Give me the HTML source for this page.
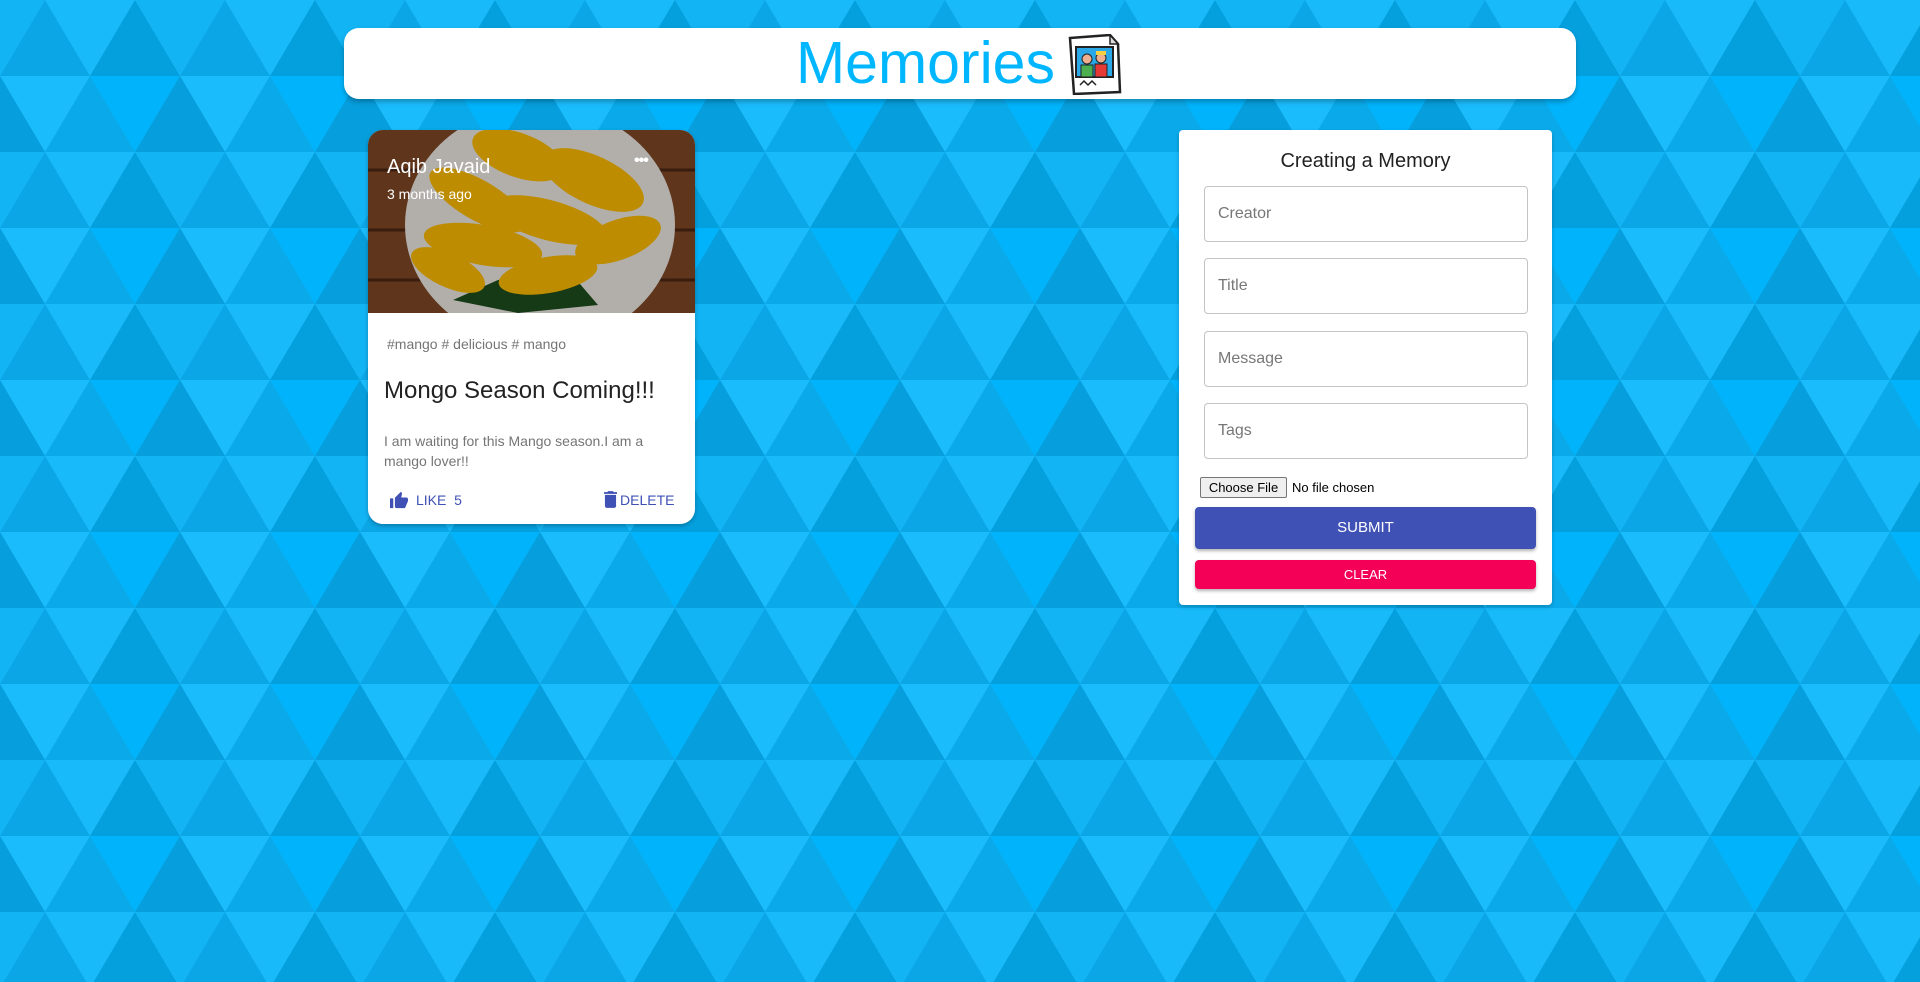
<!DOCTYPE html>
<html><head><meta charset="utf-8"><style>
*{box-sizing:border-box;margin:0;padding:0}
body{width:1920px;height:982px;overflow:hidden;font-family:"Liberation Sans",Arial,sans-serif;position:relative;background:#10b0f0}
#bg{position:absolute;left:0;top:0}
.hdr{position:absolute;left:344px;top:28px;width:1232px;height:71px;background:#fff;border-radius:15px;box-shadow:0 3px 5px rgba(0,0,0,.25)}
.hdr h1{position:absolute;left:796px;top:0;font-weight:400;font-size:59px;color:#00b7ff;line-height:71px;margin-left:-344px}
.card{position:absolute;left:368px;top:130px;width:327px;height:394px;background:#fff;border-radius:15px;overflow:hidden;box-shadow:0 2px 4px rgba(0,0,0,.25)}
.img{position:absolute;left:0;top:0;width:327px;height:183px}
.t{position:absolute;white-space:nowrap}
.form{position:absolute;left:1179px;top:130px;width:373px;height:475px;background:#fff;border-radius:4px;box-shadow:0 2px 4px rgba(0,0,0,.2)}
.inp{position:absolute;left:25px;width:324px;height:56px;border:1px solid #c4c4c4;border-radius:4px;font-size:16px;color:#777;padding:18px 0 0 13px}
</style></head><body>
<svg id="bg" width="1920" height="982">
<defs><pattern id="p" width="180" height="152" patternUnits="userSpaceOnUse">
<rect width="180" height="152" fill="#10b0f0"/>
<polygon points="0,76 45,0 90,76" fill="#0ba6e6"/>
<polygon points="45,0 135,0 90,76" fill="#18bafa"/>
<polygon points="90,76 135,0 180,76" fill="#04a0de"/>
<polygon points="-45,0 45,0 0,76" fill="#13b4f4"/>
<polygon points="135,0 225,0 180,76" fill="#13b4f4"/>
<polygon points="0,76 90,76 45,152" fill="#1bbcfc"/>
<polygon points="45,152 90,76 135,152" fill="#0aa9e9"/>
<polygon points="90,76 180,76 135,152" fill="#00b3fb"/>
<polygon points="-45,152 0,76 45,152" fill="#069edc"/>
<polygon points="135,152 180,76 225,152" fill="#069edc"/>
</pattern></defs>
<rect width="1920" height="982" fill="url(#p)"/>
</svg>
<div class="hdr"><h1>Memories</h1>
<svg style="position:absolute;left:722px;top:6px" width="57" height="61" viewBox="0 0 57 61">
<polygon points="4,4 44,1 52,10 54,58 8,60" fill="#fff" stroke="#222" stroke-width="2.5"/>
<polygon points="44,1 44,10 52,10" fill="#ddd" stroke="#222" stroke-width="1.5"/>
<rect x="10" y="13" width="37" height="30" fill="#2aa8e8" stroke="#222" stroke-width="2"/>
<circle cx="21" cy="25" r="5" fill="#f0b090" stroke="#222"/><circle cx="35" cy="24" r="5" fill="#f0b090" stroke="#222"/>
<rect x="30" y="17" width="10" height="4" fill="#f5d040"/>
<rect x="15" y="31" width="12" height="12" fill="#4caf50" stroke="#222"/><rect x="29" y="30" width="12" height="13" fill="#e53935" stroke="#222"/>
<path d="M14,51 l4,-4 4,4 4,-4 4,4" fill="none" stroke="#222" stroke-width="1.5"/>
</svg></div>

<div class="card">
<svg class="img" viewBox="0 0 327 183">
<rect width="327" height="183" fill="#7a4424"/>
<g stroke="#4a2612" stroke-width="3"><line x1="0" y1="40" x2="327" y2="40"/><line x1="0" y1="100" x2="327" y2="100"/><line x1="0" y1="150" x2="327" y2="150"/></g>
<ellipse cx="172" cy="95" rx="135" ry="120" fill="#e4e0da"/>
<polygon points="85,170 130,150 200,140 230,175 150,183" fill="#1d4a1d"/>
<g fill="#f2b400">
<ellipse cx="150" cy="25" rx="48" ry="22" transform="rotate(20 150 25)"/>
<ellipse cx="225" cy="50" rx="55" ry="24" transform="rotate(25 225 50)"/>
<ellipse cx="110" cy="70" rx="55" ry="20" transform="rotate(30 110 70)"/>
<ellipse cx="180" cy="90" rx="60" ry="20" transform="rotate(15 180 90)"/>
<ellipse cx="115" cy="115" rx="60" ry="20" transform="rotate(10 115 115)"/>
<ellipse cx="250" cy="110" rx="45" ry="20" transform="rotate(-20 250 110)"/>
<ellipse cx="180" cy="145" rx="50" ry="18" transform="rotate(-10 180 145)"/>
<ellipse cx="80" cy="140" rx="40" ry="17" transform="rotate(25 80 140)"/>
</g>
<rect width="327" height="183" fill="rgba(0,0,0,.22)"/>
</svg>
<div class="t" style="left:19px;top:26px;font-size:20px;color:#fff">Aqib Javaid</div>
<div class="t" style="left:19px;top:56px;font-size:14px;color:#fff">3 months ago</div>
<div class="t" style="left:266px;top:22px;font-size:16px;color:#fff;font-weight:bold;letter-spacing:-1px">•••</div>
<div class="t" style="left:19px;top:206px;font-size:14px;color:#757575">#mango # delicious # mango</div>
<div class="t" style="left:16px;top:247px;font-size:24px;color:#222">Mongo Season Coming!!!</div>
<div class="t" style="left:16px;top:301px;font-size:14px;color:#757575;line-height:20px">I am waiting for this Mango season.I am a<br>mango lover!!</div>
<svg style="position:absolute;left:21px;top:361px" width="20" height="18" viewBox="0 0 24 22"><path d="M1 21h4V9H1v12zm22-11c0-1.1-.9-2-2-2h-6.3l1-4.6v-.3c0-.4-.2-.8-.4-1.1L14.2 1 7.6 7.6C7.2 7.9 7 8.4 7 9v10c0 1.1.9 2 2 2h9c.8 0 1.5-.5 1.8-1.2l3-7.1c.1-.2.2-.5.2-.7v-2z" fill="#3f51b5"/></svg>
<div class="t" style="left:48px;top:362px;font-size:14px;color:#3f51b5">LIKE &nbsp;5</div>
<svg style="position:absolute;left:236px;top:361px" width="13" height="17" viewBox="0 0 14 18"><path d="M1 16c0 1.1.9 2 2 2h8c1.1 0 2-.9 2-2V4H1v12zM14 1h-3.5l-1-1h-5l-1 1H0v2h14V1z" fill="#3f51b5"/></svg>
<div class="t" style="left:252px;top:362px;font-size:14px;color:#3f51b5">DELETE</div>
</div>

<div class="form">
<div class="t" style="left:0;width:373px;text-align:center;top:20px;font-size:20px;color:#222">Creating a Memory</div>
<div class="inp" style="top:56px">Creator</div>
<div class="inp" style="top:128px">Title</div>
<div class="inp" style="top:201px">Message</div>
<div class="inp" style="top:273px">Tags</div>
<div class="t" style="left:21px;top:347px;width:87px;height:21px;border:1px solid #767676;border-radius:2px;background:#efefef;font-size:13px;text-align:center;line-height:19px;color:#000">Choose File</div>
<div class="t" style="left:113px;top:350px;font-size:13px;color:#000">No file chosen</div>
<div class="t" style="left:16px;top:377px;width:341px;height:42px;background:#3f51b5;border-radius:4px;color:#fff;font-size:15px;text-align:center;line-height:42px;box-shadow:0 2px 3px rgba(0,0,0,.3)">SUBMIT</div>
<div class="t" style="left:16px;top:430px;width:341px;height:29px;background:#f50057;border-radius:4px;color:#fff;font-size:13px;text-align:center;line-height:29px;box-shadow:0 2px 3px rgba(0,0,0,.3)">CLEAR</div>
</div>
</body></html>
